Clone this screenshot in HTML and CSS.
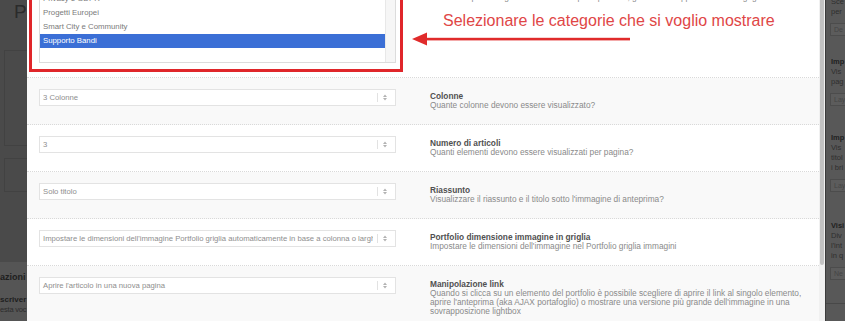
FILE: index.html
```html
<!DOCTYPE html>
<html lang="it">
<head>
    <meta charset="UTF-8">
    <meta name="viewport" content="width=device-width, initial-scale=1.0">
    <title>Impostazioni portfolio</title>
    <link rel="stylesheet" href="styles.css">
</head>
<body>
    <div class="screen">
        <div class="page-bg">
            <div class="page-title">P</div>
            <div class="ghost-box tall"></div>
            <div class="ghost-box short"></div>
            <div class="page-foot">
                <div class="foot-title">azioni</div>
                <div class="foot-label">scriver</div>
                <div class="foot-text">esta voc</div>
            </div>
        </div>

        <div class="modal">
            <div class="modal-body">
                <div class="row row-first">
                    <div class="field annot-box">
                        <div class="listbox">
                            <div class="opts">
                                <div class="opt">Privacy e GDPR</div>
                                <div class="opt">Progetti Europei</div>
                                <div class="opt">Smart City e Community</div>
                                <div class="opt selected">Supporto Bandi</div>
                            </div>
                            <div class="listbox-bar"></div>
                        </div>
                    </div>
                    <div class="label">
                        <div class="label-desc peek">Seleziona quali categorie vuoi utilizzare per il portfolio, gli elementi appariranno nella griglia</div>
                        <div class="annot">
                            <div class="annot-text">Selezionare le categorie che si voglio mostrare</div>
                            <svg class="annot-arrow" width="218" height="14" viewBox="0 0 218 14">
                                <polygon points="0,7 15,0.5 15,13.5" fill="#e02b2b"/>
                                <rect x="13" y="5.8" width="205" height="2.6" fill="#e02b2b"/>
                            </svg>
                        </div>
                    </div>
                </div>

                <div class="row alt">
                    <div class="field">
                        <div class="select">
                            <span class="select-value">3 Colonne</span>
                            <span class="select-sep"></span>
                            <svg class="select-arrow" width="4" height="7" viewBox="0 0 4 7"><polygon points="0,3 2,0.5 4,3"/><polygon points="0,4 2,6.5 4,4"/></svg>
                        </div>
                    </div>
                    <div class="label">
                        <div class="label-title">Colonne</div>
                        <div class="label-desc">Quante colonne devono essere visualizzato?</div>
                    </div>
                </div>

                <div class="row">
                    <div class="field">
                        <div class="select">
                            <span class="select-value">3</span>
                            <span class="select-sep"></span>
                            <svg class="select-arrow" width="4" height="7" viewBox="0 0 4 7"><polygon points="0,3 2,0.5 4,3"/><polygon points="0,4 2,6.5 4,4"/></svg>
                        </div>
                    </div>
                    <div class="label">
                        <div class="label-title">Numero di articoli</div>
                        <div class="label-desc">Quanti elementi devono essere visualizzati per pagina?</div>
                    </div>
                </div>

                <div class="row alt">
                    <div class="field">
                        <div class="select">
                            <span class="select-value">Solo titolo</span>
                            <span class="select-sep"></span>
                            <svg class="select-arrow" width="4" height="7" viewBox="0 0 4 7"><polygon points="0,3 2,0.5 4,3"/><polygon points="0,4 2,6.5 4,4"/></svg>
                        </div>
                    </div>
                    <div class="label">
                        <div class="label-title">Riassunto</div>
                        <div class="label-desc">Visualizzare il riassunto e il titolo sotto l'immagine di anteprima?</div>
                    </div>
                </div>

                <div class="row">
                    <div class="field">
                        <div class="select">
                            <span class="select-value">Impostare le dimensioni dell'immagine Portfolio griglia automaticamente in base a colonna o larghezza</span>
                            <span class="select-sep"></span>
                            <svg class="select-arrow" width="4" height="7" viewBox="0 0 4 7"><polygon points="0,3 2,0.5 4,3"/><polygon points="0,4 2,6.5 4,4"/></svg>
                        </div>
                    </div>
                    <div class="label">
                        <div class="label-title">Portfolio dimensione immagine in griglia</div>
                        <div class="label-desc">Impostare le dimensioni dell'immagine nel Portfolio griglia immagini</div>
                    </div>
                </div>

                <div class="row alt last">
                    <div class="field">
                        <div class="select">
                            <span class="select-value">Aprire l'articolo in una nuova pagina</span>
                            <span class="select-sep"></span>
                            <svg class="select-arrow" width="4" height="7" viewBox="0 0 4 7"><polygon points="0,3 2,0.5 4,3"/><polygon points="0,4 2,6.5 4,4"/></svg>
                        </div>
                    </div>
                    <div class="label">
                        <div class="label-title">Manipolazione link</div>
                        <div class="label-desc">Quando si clicca su un elemento del portfolio è possibile scegliere di aprire il link al singolo elemento, aprire l'anteprima (aka AJAX portafoglio) o mostrare una versione più grande dell'immagine in una sovrapposizione lightbox</div>
                    </div>
                </div>
            </div>
            <div class="modal-scroll"><div class="thumb"></div></div>
        </div>

        <div class="side">
            <div class="side-group first">
                <div class="side-line">Sce</div>
                <div class="side-line">per</div>
                <div class="side-input">De</div>
            </div>
            <div class="side-group g2">
                <div class="side-line bold">Imp</div>
                <div class="side-line">Vis</div>
                <div class="side-line">pag</div>
                <div class="side-input">Lay</div>
            </div>
            <div class="side-group g3">
                <div class="side-line bold">Imp</div>
                <div class="side-line">Vis</div>
                <div class="side-line">titol</div>
                <div class="side-line">i bri</div>
                <div class="side-input">Lay</div>
            </div>
            <div class="side-group g4">
                <div class="side-line bold">Visi</div>
                <div class="side-line">Div</div>
                <div class="side-line">l'int</div>
                <div class="side-line">in q</div>
                <div class="side-input">Ne</div>
            </div>
            <div class="side-rule"></div>
        </div>
    </div>
</body>
</html>
```

FILE: styles.css
```css
html {
    background: #4b4b4b;
}

body {
    margin: 0;
    width: 845px;
    height: 321px;
    overflow: hidden;
    background: #4b4b4b;
    font-family: "Liberation Sans", Arial, sans-serif;
}

.screen {
    display: flex;
    height: 321px;
    background: #4b4b4b;
}

/* dimmed page behind the modal */
.page-bg {
    width: 27px;
    flex: none;
    display: flex;
    flex-direction: column;
    overflow: hidden;
    background: #4a4a4a;
    box-shadow: inset 0 0 0 60px #4a4a4a;
}

.page-title {
    padding: 1px 0 0 14px;
    font-size: 19px;
    line-height: 22px;
    color: #2b2b2b;
}

.ghost-box {
    margin-left: 4px;
    border: 1px solid #424242;
    border-right: none;
}

.ghost-box.tall {
    margin-top: 27px;
    height: 94px;
}

.ghost-box.short {
    margin-top: 12px;
    height: 32px;
}

.page-foot {
    margin-top: auto;
    height: 59px;
    box-sizing: border-box;
    padding-top: 9px;
    background: #555;
    box-shadow: inset 0 0 0 60px #555;
    white-space: nowrap;
}

.foot-title {
    font-size: 9px;
    line-height: 12px;
    font-weight: bold;
    color: #1e1e1e;
}

.foot-label {
    margin-top: 12px;
    font-size: 8px;
    line-height: 10px;
    font-weight: bold;
    color: #1e1e1e;
}

.foot-text {
    font-size: 7.5px;
    line-height: 10px;
    letter-spacing: -0.2px;
    color: #2c2c2c;
}

/* modal */
.modal {
    width: 798px;
    flex: none;
    display: flex;
    background-color: #fff;
}

.modal-body {
    width: 792px;
    overflow: hidden;
}

.modal-scroll {
    width: 6px;
    padding-left: 1px;
    box-sizing: border-box;
    background-color: #f1f1f1;
}

.thumb {
    width: 4px;
    height: 265px;
    background-color: #c3c3c3;
    border-radius: 0 0 2px 2px;
}

.row {
    display: flex;
    gap: 34px;
    height: 47px;
    box-sizing: border-box;
    padding: 11px 0 0 12px;
    border-bottom: 1px dotted #d9d9d9;
    background-color: #fff;
}

.row.alt {
    background-color: #f9f9f9;
}

.row.last {
    height: 60px;
    border-bottom: none;
}

.row-first {
    height: 92px;
    margin-top: -14px;
    padding-top: 0;
}

.field {
    width: 357px;
    flex: none;
}

/* red annotation frame */
.field.annot-box {
    width: 374px;
    margin: 0 -7px 0 -10px;
    padding: 0 4px 6px 7px;
    border: 3px solid #e0262a;
    border-top: none;
    height: 86px;
    box-sizing: border-box;
    display: flex;
    flex-direction: column;
    justify-content: flex-end;
}

.listbox {
    display: flex;
    height: 74px;
    border: 1px solid #dcdcdc;
    border-top: none;
    background-color: #fff;
}

.opts {
    flex: 1;
    padding-bottom: 14px;
    display: flex;
    flex-direction: column;
    justify-content: flex-end;
}

.opt {
    height: 14px;
    line-height: 14px;
    padding-left: 3px;
    font-size: 7.8px;
    color: #7a7a7a;
}

.opt.selected {
    background-color: #3b6fd6;
    color: #fff;
}

.listbox-bar {
    width: 9px;
    border-left: 1px solid #e8e8e8;
    background-color: #f6f6f6;
}

.annot {
    margin-left: -18px;
    padding-top: 9px;
}

.annot-text {
    padding-left: 31px;
    font-size: 16px;
    line-height: 19px;
    color: #e04646;
    white-space: nowrap;
}

.annot-arrow {
    display: block;
    margin-top: 2px;
}

/* select boxes */
.select {
    width: 357px;
    height: 17px;
    box-sizing: border-box;
    border: 1px solid #e3e3e3;
    background-color: #fff;
    display: flex;
    align-items: center;
    font-size: 7.7px;
    color: #8e8e8e;
}

.select-value {
    flex: 1;
    min-width: 0;
    padding-left: 3px;
    white-space: nowrap;
    overflow: hidden;
}

.select-sep {
    width: 1px;
    height: 9px;
    margin: 0 5px 0 4px;
    background-color: #e2e2e2;
}

.select-arrow {
    display: block;
    margin-right: 8px;
    fill: #b2b2b2;
}

/* labels */
.label {
    width: 380px;
    padding-top: 2px;
}

.label-title {
    font-size: 8.3px;
    line-height: 10px;
    font-weight: bold;
    color: #505050;
}

.label-desc {
    font-size: 8.3px;
    line-height: 9px;
    color: #8a8a8a;
}

.label-desc.peek {
    margin-top: 5px;
    white-space: nowrap;
}

/* settings panel on the right */
.side {
    flex: 1;
    border-left: 1px solid #3c3c3c;
    background: #585858;
    box-shadow: inset 0 0 0 40px #585858;
    overflow: hidden;
    padding-left: 4px;
    font-size: 7.5px;
    line-height: 10px;
    color: #2e2e2e;
}

.side-group {
    white-space: nowrap;
}

.side-group.first {
    margin-top: -3px;
}

.side-group.g2 {
    margin-top: 21px;
}

.side-group.g3 {
    margin-top: 27px;
}

.side-group.g4 {
    margin-top: 29px;
}

.side-line {
    padding-left: 1px;
}

.side-line.bold {
    font-weight: bold;
    color: #1f1f1f;
}

.side-input {
    width: 100px;
    height: 13px;
    box-sizing: border-box;
    margin-top: 6px;
    padding: 1px 0 0 3px;
    border: 1px solid #4c4c4c;
    background: #5c5c5c;
    color: #454545;
    font-size: 7px;
}

.side-rule {
    margin: 23px 0 0 -4px;
    height: 1px;
    background: #484848;
}
```
